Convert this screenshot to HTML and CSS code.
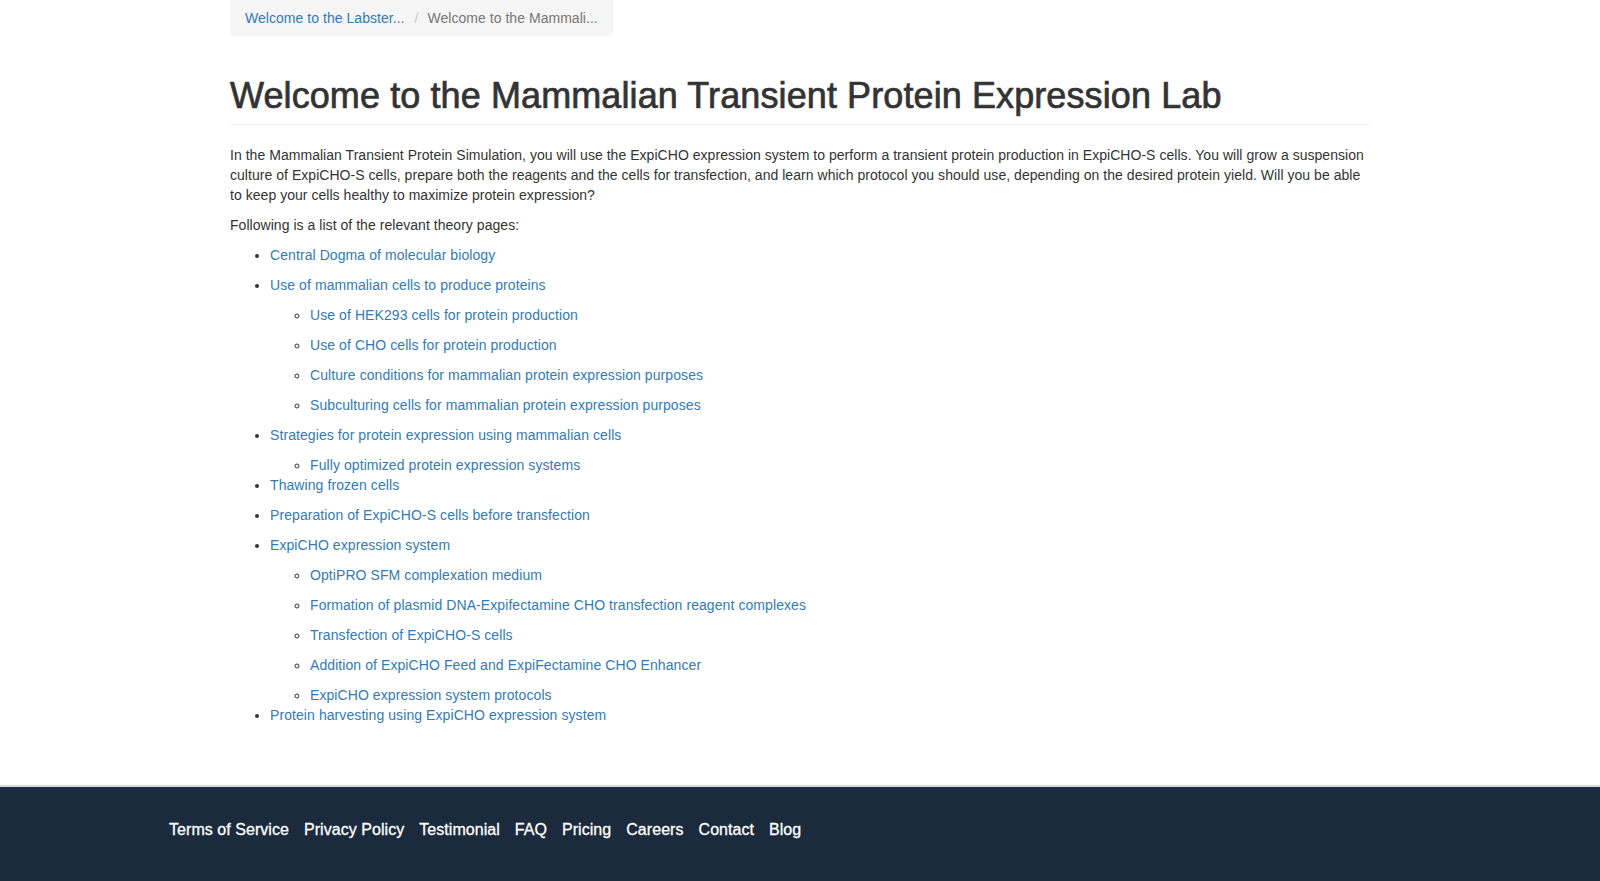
FILE: index.html
```html
<!DOCTYPE html>
<html lang="en">
<head>
<meta charset="utf-8">
<title>Welcome to the Mammalian Transient Protein Expression Lab</title>
<link rel="stylesheet" href="styles.css">
</head>
<body>
<main class="container">
  <ol class="breadcrumb">
    <li><a href="#">Welcome to the Labster...</a></li>
    <li class="active">Welcome to the Mammali...</li>
  </ol>
  <div class="page-header">
    <h1>Welcome to the Mammalian Transient Protein Expression Lab</h1>
  </div>
  <p>In the Mammalian Transient Protein Simulation, you will use the ExpiCHO expression system to perform a transient protein production in ExpiCHO-S cells. You will grow a suspension culture of ExpiCHO-S cells, prepare both the reagents and the cells for transfection, and learn which protocol you should use, depending on the desired protein yield. Will you be able to keep your cells healthy to maximize protein expression?</p>
  <p>Following is a list of the relevant theory pages:</p>
  <ul class="theory">
    <li><a href="#">Central Dogma of molecular biology</a></li>
    <li><a href="#">Use of mammalian cells to produce proteins</a>
      <ul>
        <li><a href="#">Use of HEK293 cells for protein production</a></li>
        <li><a href="#">Use of CHO cells for protein production</a></li>
        <li><a href="#">Culture conditions for mammalian protein expression purposes</a></li>
        <li><a href="#">Subculturing cells for mammalian protein expression purposes</a></li>
      </ul>
    </li>
    <li><a href="#">Strategies for protein expression using mammalian cells</a>
      <ul class="tight-end">
        <li><a href="#">Fully optimized protein expression systems</a></li>
      </ul>
    </li>
    <li><a href="#">Thawing frozen cells</a></li>
    <li><a href="#">Preparation of ExpiCHO-S cells before transfection</a></li>
    <li><a href="#">ExpiCHO expression system</a>
      <ul class="tight-end">
        <li><a href="#">OptiPRO SFM complexation medium</a></li>
        <li><a href="#">Formation of plasmid DNA-Expifectamine CHO transfection reagent complexes</a></li>
        <li><a href="#">Transfection of ExpiCHO-S cells</a></li>
        <li><a href="#">Addition of ExpiCHO Feed and ExpiFectamine CHO Enhancer</a></li>
        <li><a href="#">ExpiCHO expression system protocols</a></li>
      </ul>
    </li>
    <li class="last"><a href="#">Protein harvesting using ExpiCHO expression system</a></li>
  </ul>
</main>
<footer class="site-footer">
  <nav class="footer-inner">
    <a href="#">Terms of Service</a>
    <a href="#">Privacy Policy</a>
    <a href="#">Testimonial</a>
    <a href="#">FAQ</a>
    <a href="#">Pricing</a>
    <a href="#">Careers</a>
    <a href="#">Contact</a>
    <a href="#">Blog</a>
  </nav>
</footer>
</body>
</html>
```

FILE: styles.css
```css
* { box-sizing: border-box; }

html, body {
  margin: 0;
  padding: 0;
}

body {
  font-family: "Liberation Sans", Arial, sans-serif;
  font-size: 14px;
  line-height: 20px;
  letter-spacing: 0.04px;
  color: #333;
  background: #fff;
}

a {
  color: #337ab7;
  text-decoration: none;
}

.container {
  width: 1170px;
  margin: 0 auto;
  padding: 0 15px 50px;
}

.breadcrumb {
  display: inline-flex;
  list-style: none;
  margin: 0 0 20px;
  padding: 8px 15px;
  background: #f5f5f5;
  border-radius: 0 0 4px 4px;
}

.breadcrumb li + li::before {
  content: "/";
  color: #ccc;
  padding: 0 9px 0 10px;
}

.breadcrumb .active {
  color: #777;
}

.page-header {
  margin: 20px 0 20px;
  padding-bottom: 8px;
  border-bottom: 1px solid #eee;
}

.page-header h1 {
  margin: 0;
  font-size: 36px;
  line-height: 40px;
  font-weight: 500;
  letter-spacing: 0.1px;
  color: #333;
  -webkit-text-stroke: 0.7px #333;
}

p {
  margin: 0 0 10px;
}

.theory {
  margin: 0 0 10px;
  padding-left: 40px;
}

.theory a {
  letter-spacing: 0.08px;
}

.theory ul {
  margin: 10px 0 0;
  padding-left: 40px;
  list-style: circle;
}

.theory li {
  margin-bottom: 10px;
}

.theory ul.tight-end li:last-child {
  margin-bottom: 0;
}

.theory ul.tight-end {
  margin-bottom: -10px;
}

.theory li.last {
  margin-bottom: 0;
}

.site-footer {
  background: #1b2a3c;
  border-top: 2px solid #d9d9d9;
  height: 98px;
}

.footer-inner {
  display: flex;
  gap: 15px;
  padding: 33px 0 0 169px;
}

.footer-inner a {
  color: #fff;
  font-size: 16px;
  line-height: 20px;
  letter-spacing: 0.05px;
  -webkit-text-stroke: 0.3px #fff;
}
```
